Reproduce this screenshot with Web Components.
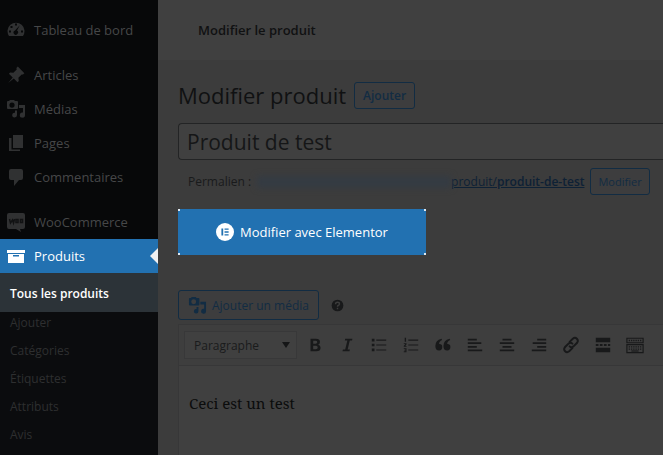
<!DOCTYPE html>
<html lang="fr">
<head>
<meta charset="utf-8">
<meta name="viewport" content="width=device-width, initial-scale=1">
<title>Modifier le produit</title>
<style>
    html, body {
        margin: 0;
        height: 100%;
    }
    body {
        background: #3c3c3c;
        color: #101112;
        font-family: "Open Sans", "Noto Sans", sans-serif;
        font-size: 13px;
        overflow: hidden;
    }
</style>
</head>
<body>
<product-page></product-page>

<script>
const ICONS = {
    dashboard: '<path fill-rule="evenodd" d="M3 16a8.500 8.500 0 1 1 14 0zM9 3.500h2v2H9zM4.500 6h2v2h-2zM3 10.500h2v2H3zM15 10.500h2v2h-2zM13.800 5.200 11 10.600a2.200 2.200 0 1 1-2-.2z"/>',
    pin: '<path d="M10.400 3l1.400-1.400 6.600 6.600L17 9.600l-1.300-.2-3.300 3.400.4 3.200-1.300 1.200-3.700-3.700-5.600 4.500L6.700 12.400 2.900 8.700l1.200-1.300 3.300.4 3.300-3.400z"/>',
    media: '<path fill-rule="evenodd" d="M2 2h1l1-1h4l1 1h2q1 0 1 1v6q0 1-1 1H2q-1 0-1-1V3q0-1 1-1zm4 1.500a2.600 2.600 0 1 0 0 5.200 2.600 2.600 0 0 0 0-5.200zM13 6h6v10a2.600 2.600 0 1 1-2-2.500V9h-4zM9 11.500h2V16a2.400 2.400 0 1 1-2-2.300z"/>',
    pages: '<path d="M7 2h10v13H7zM3 5h2.500v11.500H14V18H3z"/>',
    comment: '<path d="M5 2h10q2 0 2 2v7q0 2-2 2h-2l-5 6v-6H5q-2 0-2-2V4q0-2 2-2z"/>',
    woo: '<path d="M3 1h14q2 0 2 2v12q0 2-2 2h-3l1 3-5-3H3q-2 0-2-2V3q0-2 2-2z"/><path fill="none" stroke="#111213" stroke-width="1.500" d="M3.500 7l1 4 2-3 1 3 1-4M10 7.500h2v3h-2zM14.500 7.500h2v3h-2z"/>',
    archive: '<path fill-rule="evenodd" d="M1 4h18v3H1zM2 8h16v9H2zM7 9v1.500h6V9z"/>',
    elementor: '<circle cx="10" cy="10" r="10" fill="#fff"/><path fill="#2271b1" d="M6 6h2v8H6zM9.500 6H14v1.600H9.500zM9.500 9.200H14v1.600H9.500zM9.500 12.400H14V14H9.500z"/>',
    help: '<circle cx="10" cy="10" r="9"/><path fill="none" stroke="#3c3c3c" stroke-width="2.200" d="M7 8q0-3 3-3t3 2.600q0 1.600-2 2.400-1 .4-1 2M10 13.500v2.200"/>',
    bold: '<path fill-rule="evenodd" d="M5 3h6q4.500 0 4.500 3.600 0 2.200-2 3 2.700.7 2.700 3.500Q16.200 17 11.500 17H5zm3 2.400v3.200h2.600q1.900 0 1.900-1.600t-1.900-1.600zm0 5.500v3.700h3q2 0 2-1.900t-2-1.800z"/>',
    italic: '<path d="M8 3h8l-.4 2h-2.500l-2.400 10h2.500l-.5 2H5l.5-2H8l2.400-10H7.600z"/>',
    bullets: '<path d="M2 3h3v3H2zM2 8.500h3v3H2zM2 14h3v3H2zM7 4h11v1.200H7zM7 9.400h11v1.200H7zM7 15h11v1.200H7z"/>',
    numbers: '<path d="M3 2h1.500v4.500H3zM2 8h3v1.200L3.800 11H5v1H2v-1l1.600-2H2zM2 13.500h3V18H2v-1h1.800v-.8H2.500v-1h1.300v-.7H2zM7 4h11v1.200H7zM7 9.400h11v1.200H7zM7 15h11v1.200H7z"/>',
    quote: '<path d="M9 4.500Q5.500 6 5.700 9q3.500-.2 3.500 3.200Q9.200 16 5.700 16 1.500 16 1.500 11 1.500 4.500 8.300 3zM18 4.500Q14.500 6 14.700 9q3.500-.2 3.500 3.200 0 3.800-3.500 3.800-4.200 0-4.200-5 0-6.500 6.800-8z"/>',
    left: '<path d="M2 3h10v2H2zM2 7h15v2H2zM2 11h10v2H2zM2 15h16v2H2z"/>',
    center: '<path d="M5 3h10v2H5zM2 7h16v2H2zM5 11h10v2H5zM2 15h16v2H2z"/>',
    right: '<path d="M8 3h10v2H8zM3 7h15v2H3zM8 11h10v2H8zM2 15h16v2H2z"/>',
    link: '<g fill="none" stroke="currentColor" stroke-width="2.200" stroke-linecap="round"><path d="M8.500 6.500 12 3q2.500-2 4.500 0t.3 4.500l-4 4q-2.200 2-4.300 0M11.500 13.500 8 17q-2.500 2-4.500 0t-.3-4.500l4-4q2.200-2 4.300 0"/></g>',
    more: '<path d="M2 2h16v5H2zM2 9h3v2H2zM6.500 9h3v2h-3zM11 9h3v2h-3zM15.500 9H18v2h-2.500zM2 13h16v5H2z"/>',
    keyboard: '<path fill="none" stroke="currentColor" stroke-width="1.300" d="M1 2.500h18v5H1zM1 9.500h18v9H1z"/><path fill="none" stroke="currentColor" stroke-width="1.500" stroke-dasharray="1.500 1" d="M3 5h14M3 12h14M3 14.500h14"/><path d="M6 16h8v1.300H6z"/>'
};

class WpIcon extends HTMLElement {
    constructor() {
        super();
        this.attachShadow({ mode: 'open' });
    }

    connectedCallback() {
        this.shadowRoot.innerHTML = `
            <style>
                :host {
                    display: inline-block;
                    flex: none;
                    width: 20px;
                    height: 20px;
                }
                svg {
                    display: block;
                    width: 100%;
                    height: 100%;
                    fill: currentColor;
                }
            </style>
            <svg viewBox="0 0 20 20" aria-hidden="true">${ICONS[this.getAttribute('name')]}</svg>
        `;
    }
}

class MenuItem extends HTMLElement {
    constructor() {
        super();
        this.attachShadow({ mode: 'open' });
    }

    connectedCallback() {
        this.shadowRoot.innerHTML = `
            <style>
                :host {
                    display: block;
                    color: #464748;
                }
                :host([separated]) {
                    margin-top: 11px;
                }
                a {
                    display: flex;
                    align-items: center;
                    gap: 8px;
                    height: 34px;
                    padding-left: 6px;
                    color: inherit;
                    font-size: 13px;
                    text-decoration: none;
                }
                wp-icon {
                    color: #303132;
                }
                :host([current]) {
                    position: relative;
                    background: #2271b1;
                    color: #fff;
                }
                :host([current]) wp-icon {
                    color: #fff;
                }
                :host([current])::after {
                    content: "";
                    position: absolute;
                    right: 0;
                    top: 9px;
                    border: 8px solid transparent;
                    border-left-width: 0;
                    border-right-color: #f0f0f1;
                }
            </style>
            <a href="#"><wp-icon name="${this.getAttribute('icon')}"></wp-icon><slot></slot></a>
        `;
    }
}

class AdminMenu extends HTMLElement {
    constructor() {
        super();
        this.attachShadow({ mode: 'open' });
        this.shadowRoot.innerHTML = `
            <style>
                :host {
                    display: block;
                    padding-top: 13px;
                    background: #070809;
                    box-sizing: border-box;
                }
                ul {
                    display: grid;
                    gap: 6px;
                    margin: 0;
                    padding: 0 0 20px;
                    list-style: none;
                    font-size: 12px;
                    line-height: 22px;
                    background: #0b0c0e;
                }
                a {
                    display: block;
                    padding-left: 10px;
                    color: #2e2f30;
                    text-decoration: none;
                }
                .current {
                    margin-bottom: -6px;
                    padding: 10px 0 7px;
                    background: #2c3338;
                }
                .current a {
                    color: #fff;
                    font-weight: 600;
                }
            </style>
            <nav>
                <menu-item icon="dashboard">Tableau de bord</menu-item>
                <menu-item icon="pin" separated>Articles</menu-item>
                <menu-item icon="media">Médias</menu-item>
                <menu-item icon="pages">Pages</menu-item>
                <menu-item icon="comment">Commentaires</menu-item>
                <menu-item icon="woo" separated>WooCommerce</menu-item>
                <menu-item icon="archive" current>Produits</menu-item>
                <ul>
                    <li class="current"><a href="#">Tous les produits</a></li>
                    <li><a href="#">Ajouter</a></li>
                    <li><a href="#">Catégories</a></li>
                    <li><a href="#">Étiquettes</a></li>
                    <li><a href="#">Attributs</a></li>
                    <li><a href="#">Avis</a></li>
                </ul>
            </nav>
        `;
    }
}

class WpButton extends HTMLElement {
    constructor() {
        super();
        this.attachShadow({ mode: 'open' });
        this.shadowRoot.innerHTML = `
            <style>
                :host {
                    display: inline-block;
                    flex: none;
                    font-size: 12px;
                }
                button {
                    display: flex;
                    align-items: center;
                    gap: 5px;
                    height: 27px;
                    padding: 0 8px;
                    border: 1px solid #122c43;
                    border-radius: 3px;
                    background: #3d3d3e;
                    color: #122c43;
                    font: inherit;
                }
                :host([primary]) button {
                    gap: 6px;
                    height: 46px;
                    padding: 0 38px;
                    border: 0;
                    border-radius: 0;
                    background: #2271b1;
                    color: #fff;
                    font-size: 13px;
                }
                :host([size="media"]) button {
                    height: 30px;
                    padding: 0 9px;
                }
                :host([size="small"]) button {
                    padding: 0 7px;
                    font-size: 11px;
                }
            </style>
            <button type="button"><slot></slot></button>
        `;
    }
}

class PermaLink extends HTMLElement {
    constructor() {
        super();
        this.attachShadow({ mode: 'open' });
        this.shadowRoot.innerHTML = `
            <style>
                :host {
                    display: flex;
                    align-items: center;
                    padding-left: 10px;
                    font-size: 12px;
                    color: #191a1b;
                }
                .domain {
                    flex: none;
                    width: 194px;
                    height: 12px;
                    margin-left: 6px;
                    background: #343b43;
                    filter: blur(3px);
                }
                a {
                    margin-right: 6px;
                    color: #0e2135;
                    white-space: nowrap;
                }
                b {
                    font-weight: 600;
                }
            </style>
            <span>Permalien&nbsp;:</span>
            <span class="domain"></span>
            <a href="#">produit/<b>produit-de-test</b></a>
            <wp-button size="small">Modifier</wp-button>
        `;
    }
}

class ContentEditor extends HTMLElement {
    constructor() {
        super();
        this.attachShadow({ mode: 'open' });
        const tools = [
            ['bold', 'Gras'], ['italic', 'Italique'], ['bullets', 'Liste à puces'],
            ['numbers', 'Liste numérotée'], ['quote', 'Citation'], ['left', 'Aligner à gauche'],
            ['center', 'Centrer'], ['right', 'Aligner à droite'], ['link', 'Lien'],
            ['more', 'Lire la suite'], ['keyboard', 'Permuter la barre']
        ];
        this.shadowRoot.innerHTML = `
            <style>
                :host {
                    display: flex;
                    flex-direction: column;
                    border: 1px solid #373738;
                    border-right: 0;
                    background: #404040;
                }
                .toolbar {
                    display: flex;
                    align-items: center;
                    height: 40px;
                    padding-left: 5px;
                    border-bottom: 1px solid #373738;
                    background: #3e3e3e;
                }
                .format {
                    display: grid;
                    align-items: center;
                    flex: none;
                    width: 113px;
                    height: 28px;
                    margin-right: 2px;
                }
                select, .format::after {
                    grid-area: 1 / 1;
                }
                .format::after {
                    content: "";
                    justify-self: end;
                    margin-right: 7px;
                    border: 4px solid transparent;
                    border-top: 6px solid #151617;
                    border-bottom: 0;
                    pointer-events: none;
                }
                select {
                    appearance: none;
                    width: 100%;
                    height: 100%;
                    padding: 0 9px;
                    border: 1px solid #383839;
                    border-radius: 0;
                    background: #404040;
                    color: #1a1b1c;
                    font: inherit;
                    font-size: 12px;
                }
                .tool {
                    display: grid;
                    place-items: center;
                    flex: none;
                    width: 32px;
                    height: 28px;
                    padding: 0;
                    border: 0;
                    background: none;
                    color: #18191a;
                }
                .tool wp-icon {
                    width: 18px;
                    height: 18px;
                }
                textarea {
                    flex: 1;
                    padding: 25px 10px;
                    border: 0;
                    resize: none;
                    background: transparent;
                    color: #0b0c0c;
                    font: 15px/24px "Noto Serif", "Liberation Serif", serif;
                }
            </style>
            <div class="toolbar">
                <div class="format">
                    <select aria-label="Format"><option>Paragraphe</option></select>
                </div>
                ${tools.map(([icon, label]) => `<button class="tool" type="button" aria-label="${label}"><wp-icon name="${icon}"></wp-icon></button>`).join('')}
            </div>
            <textarea aria-label="Contenu">Ceci est un test</textarea>
        `;
    }
}

class ProductPage extends HTMLElement {
    constructor() {
        super();
        this.attachShadow({ mode: 'open' });
        this.shadowRoot.innerHTML = `
            <style>
                :host {
                    display: grid;
                    grid-template-columns: 158px minmax(0, 1fr);
                    height: 100%;
                }
                admin-menu {
                    overflow: hidden;
                }
                main {
                    display: flex;
                    flex-direction: column;
                    min-height: 0;
                }
                header {
                    display: flex;
                    align-items: center;
                    flex: none;
                    height: 60px;
                    padding-left: 40px;
                    background: #404040;
                    font-weight: 600;
                }
                .content {
                    display: flex;
                    flex-direction: column;
                    flex: 1;
                    padding: 20px 0 0 20px;
                }
                .heading {
                    display: flex;
                    align-items: center;
                    gap: 8px;
                    height: 30px;
                }
                .heading wp-button {
                    font-weight: 600;
                }
                h1 {
                    margin: 0;
                    font-size: 22px;
                    line-height: 30px;
                    font-weight: 400;
                }
                input {
                    width: 100%;
                    height: 37px;
                    margin-top: 13px;
                    padding: 0 8px;
                    box-sizing: border-box;
                    border: 1px solid #232425;
                    border-right: 0;
                    border-radius: 4px 0 0 4px;
                    background: #404040;
                    color: #151617;
                    font: inherit;
                    font-size: 21px;
                }
                perma-link {
                    margin-top: 8px;
                }
                .builder {
                    position: relative;
                    align-self: flex-start;
                    margin-top: 14px;
                }
                .builder wp-icon {
                    width: 18px;
                    height: 18px;
                }
                /* selection handles on the four corners */
                .builder i {
                    position: absolute;
                    width: 2px;
                    height: 2px;
                    background: #dfe9f2;
                }
                .t { top: 0; }
                .b { bottom: 0; }
                .l { left: 0; }
                .r { right: 0; }
                .media {
                    display: flex;
                    align-items: center;
                    gap: 12px;
                    margin: 35px 0 4px;
                }
                .media > wp-icon {
                    width: 13px;
                    height: 13px;
                    color: #18191a;
                }
                .media wp-button wp-icon {
                    width: 19px;
                    height: 19px;
                }
                content-editor {
                    flex: 1;
                }
            </style>
            <admin-menu></admin-menu>
            <main>
                <header>Modifier le produit</header>
                <div class="content">
                    <div class="heading">
                        <h1>Modifier produit</h1>
                        <wp-button>Ajouter</wp-button>
                    </div>
                    <input type="text" aria-label="Nom du produit" value="Produit de test">
                    <perma-link></perma-link>
                    <div class="builder">
                        <wp-button primary><wp-icon name="elementor"></wp-icon>Modifier avec Elementor</wp-button>
                        <i class="t l"></i><i class="t r"></i><i class="b l"></i><i class="b r"></i>
                    </div>
                    <div class="media">
                        <wp-button size="media"><wp-icon name="media"></wp-icon>Ajouter un média</wp-button>
                        <wp-icon name="help"></wp-icon>
                    </div>
                    <content-editor></content-editor>
                </div>
            </main>
        `;
    }
}

customElements.define('wp-icon', WpIcon)
customElements.define('menu-item', MenuItem)
customElements.define('admin-menu', AdminMenu)
customElements.define('wp-button', WpButton)
customElements.define('perma-link', PermaLink)
customElements.define('content-editor', ContentEditor)
customElements.define('product-page', ProductPage)
</script>
</body>
</html>
